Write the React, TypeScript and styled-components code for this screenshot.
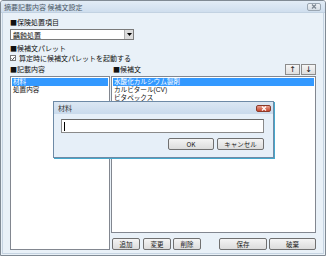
import React from 'react';
import styled, { createGlobalStyle } from 'styled-components';

const GlobalStyle = createGlobalStyle`
  html, body {
    margin: 0;
    padding: 0;
    background: #ffffff;
  }
  * {
    box-sizing: border-box;
  }
`;

const Window = styled.div`
  position: relative;
  width: 326px;
  height: 256px;
  border: 1px solid #808a94;
  border-radius: 3px 3px 0 0;
  background: #e9f1f8;
  font-family: 'Noto Sans CJK JP', 'DejaVu Sans', sans-serif;
  font-size: 7px;
  line-height: 8px;
  color: #111;
  display: flex;
  flex-direction: column;
  overflow: hidden;
`;

const TitleBar = styled.div`
  height: 12px;
  flex: none;
  display: flex;
  align-items: center;
  justify-content: space-between;
  padding: 0 4px 0 3px;
  background: linear-gradient(#e2ecf6, #cfdeee);
  border-bottom: 1px solid #c2d2e2;
  color: #4a5766;
`;

const TitleClose = styled.div`
  width: 14px;
  height: 8px;
  border: 1px solid #9aa6b2;
  border-radius: 2px;
  background: linear-gradient(#eef2f6, #d4dce4);
  display: flex;
  align-items: center;
  justify-content: center;
`;

const Body = styled.div`
  flex: 1;
  display: flex;
  flex-direction: column;
  padding: 5px 7px 3px 7px;
  border: 1px solid #c6d4e2;
  border-top: none;
  margin: 0 1px 1px 1px;
`;

const Label = styled.div<{ $top?: number }>`
  height: 8px;
  margin-top: ${p => p.$top ?? 0}px;
  white-space: nowrap;
`;

const Combo = styled.div`
  width: 124px;
  height: 11px;
  margin-top: 3px;
  background: #fff;
  border: 1px solid #7a7a7a;
  display: flex;
  align-items: center;
  padding-left: 2px;
`;

const ComboText = styled.span`
  flex: 1;
`;

const ComboArrow = styled.div`
  width: 9px;
  height: 9px;
  background: #dcdcdc;
  border-left: 1px solid #b0b0b0;
  display: flex;
  align-items: center;
  justify-content: center;
`;

const CheckRow = styled.div`
  display: flex;
  align-items: center;
  gap: 3px;
  height: 8px;
  margin-top: 2px;
`;

const CheckBox = styled.div`
  width: 6px;
  height: 6px;
  border: 1px solid #777;
  background: #fff;
  display: flex;
  align-items: center;
  justify-content: center;
`;

const Columns = styled.div`
  flex: 1;
  display: flex;
  margin-top: 2px;
`;

const LeftCol = styled.div`
  width: 107px;
  display: flex;
  flex-direction: column;
`;

const RightCol = styled.div`
  flex: 1;
  display: flex;
  flex-direction: column;
`;

const HeadRow = styled.div<{ $indent?: number }>`
  height: 12px;
  display: flex;
  align-items: flex-end;
  justify-content: space-between;
  padding-left: ${p => p.$indent ?? 0}px;
`;

const HeadText = styled.span`
  margin-bottom: 3px;
`;

const ArrowGroup = styled.div`
  display: flex;
  gap: 1px;
  margin-bottom: 1px;
`;

const ArrowBtn = styled.div`
  width: 15px;
  height: 11px;
  border: 1px solid #8c8c8c;
  background: linear-gradient(#f6f6f6, #dedede);
  display: flex;
  align-items: center;
  justify-content: center;
  font-size: 8px;
  font-family: 'DejaVu Sans', sans-serif;
`;

const ListBox = styled.div`
  background: #fff;
  border: 1px solid #828790;
  padding: 1px;
  flex: 1;
`;

const RightList = styled(ListBox)`
  margin-left: 1px;
`;

const ListItem = styled.div<{ $selected?: boolean }>`
  height: 8px;
  line-height: 8px;
  padding-left: 1px;
  white-space: nowrap;
  overflow: hidden;
  background: ${p => (p.$selected ? '#3399ff' : 'transparent')};
  color: ${p => (p.$selected ? '#fff' : '#111')};
  font-family: 'Liberation Sans', 'Noto Sans CJK JP', sans-serif;
  font-size: 6.6px;
`;

const ButtonRow = styled.div`
  height: 17px;
  display: flex;
  align-items: flex-end;
  padding-left: 2px;
`;

const Btn = styled.div<{ $w: number; $gap?: number }>`
  width: ${p => p.$w}px;
  height: 12px;
  margin-left: ${p => p.$gap ?? 0}px;
  border: 1px solid #707070;
  border-radius: 2px;
  background: linear-gradient(#f4f4f4, #dcdcdc);
  display: flex;
  align-items: center;
  justify-content: center;
  font-size: 6.5px;
  color: #222;
`;

const Dialog = styled.div`
  position: absolute;
  left: 52px;
  top: 100px;
  width: 221px;
  height: 57px;
  border: 1px solid #6e8aa6;
  box-shadow: 1px 1px 0 #45a8cc;
  background: #e6eff8;
  display: flex;
  flex-direction: column;
`;

const DialogTitle = styled.div`
  height: 12px;
  display: flex;
  align-items: center;
  justify-content: space-between;
  padding: 0 2px 0 4px;
  background: linear-gradient(#dbe7f3, #c9daec);
  color: #333;
`;

const RedClose = styled.div`
  width: 15px;
  height: 7px;
  border-radius: 2px;
  border: 1px solid #8a3a2a;
  background: linear-gradient(#e8a090, #c6452c);
  display: flex;
  align-items: center;
  justify-content: center;
`;

const DialogBody = styled.div`
  flex: 1;
  display: flex;
  flex-direction: column;
  padding: 5px 9px 0 7px;
`;

const TextInput = styled.div`
  height: 14px;
  border: 1px solid #8a8a8a;
  border-top-color: #6a6a6a;
  background: #fff;
  display: flex;
  align-items: center;
  padding-left: 2px;
`;

const Caret = styled.div`
  width: 1px;
  height: 9px;
  background: #000;
`;

const DialogButtons = styled.div`
  display: flex;
  justify-content: flex-end;
  gap: 3px;
  margin-top: 5px;
`;

const X = ({ color }: { color: string }) => (
  <svg width="6" height="5" viewBox="0 0 6 5">
    <path d="M1 0.5 L5 4.5 M5 0.5 L1 4.5" stroke={color} strokeWidth="1.2" />
  </svg>
);

const App: React.FC = () => {
  return (
    <>
      <GlobalStyle />
      <Window>
        <TitleBar>
          <span>摘要記載内容 候補文設定</span>
          <TitleClose>
            <X color="#7a8590" />
          </TitleClose>
        </TitleBar>
        <Body>
          <Label>■保険処置項目</Label>
          <Combo>
            <ComboText>齲蝕処置</ComboText>
            <ComboArrow>
              <svg width="5" height="3" viewBox="0 0 5 3">
                <path d="M0 0 H5 L2.5 3 Z" fill="#000" />
              </svg>
            </ComboArrow>
          </Combo>
          <Label $top={4}>■候補文パレット</Label>
          <CheckRow>
            <CheckBox>
              <svg width="5" height="5" viewBox="0 0 5 5">
                <path d="M0.5 2.5 L2 4 L4.5 0.8" stroke="#222" strokeWidth="1" fill="none" />
              </svg>
            </CheckBox>
            <span>算定時に候補文パレットを起動する</span>
          </CheckRow>
          <Columns>
            <LeftCol>
              <HeadRow>
                <HeadText>■記載内容</HeadText>
              </HeadRow>
              <ListBox>
                <ListItem $selected>材料</ListItem>
                <ListItem>処置内容</ListItem>
              </ListBox>
            </LeftCol>
            <RightCol>
              <HeadRow $indent={3}>
                <HeadText>■候補文</HeadText>
                <ArrowGroup>
                  <ArrowBtn>↑</ArrowBtn>
                  <ArrowBtn>↓</ArrowBtn>
                </ArrowGroup>
              </HeadRow>
              <RightList>
                <ListItem $selected>水酸化カルシウム製剤</ListItem>
                <ListItem>カルビタール(CV)</ListItem>
                <ListItem>ビタペックス</ListItem>
              </RightList>
              <ButtonRow>
                <Btn $w={28}>追加</Btn>
                <Btn $w={28} $gap={3}>変更</Btn>
                <Btn $w={28} $gap={2}>削除</Btn>
                <Btn $w={48} $gap={18}>保存</Btn>
                <Btn $w={47} $gap={2}>破棄</Btn>
              </ButtonRow>
            </RightCol>
          </Columns>
        </Body>
        <Dialog>
          <DialogTitle>
            <span>材料</span>
            <RedClose>
              <X color="#fff" />
            </RedClose>
          </DialogTitle>
          <DialogBody>
            <TextInput>
              <Caret />
            </TextInput>
            <DialogButtons>
              <Btn $w={46}>OK</Btn>
              <Btn $w={47}>キャンセル</Btn>
            </DialogButtons>
          </DialogBody>
        </Dialog>
      </Window>
    </>
  );
};

export default App;
